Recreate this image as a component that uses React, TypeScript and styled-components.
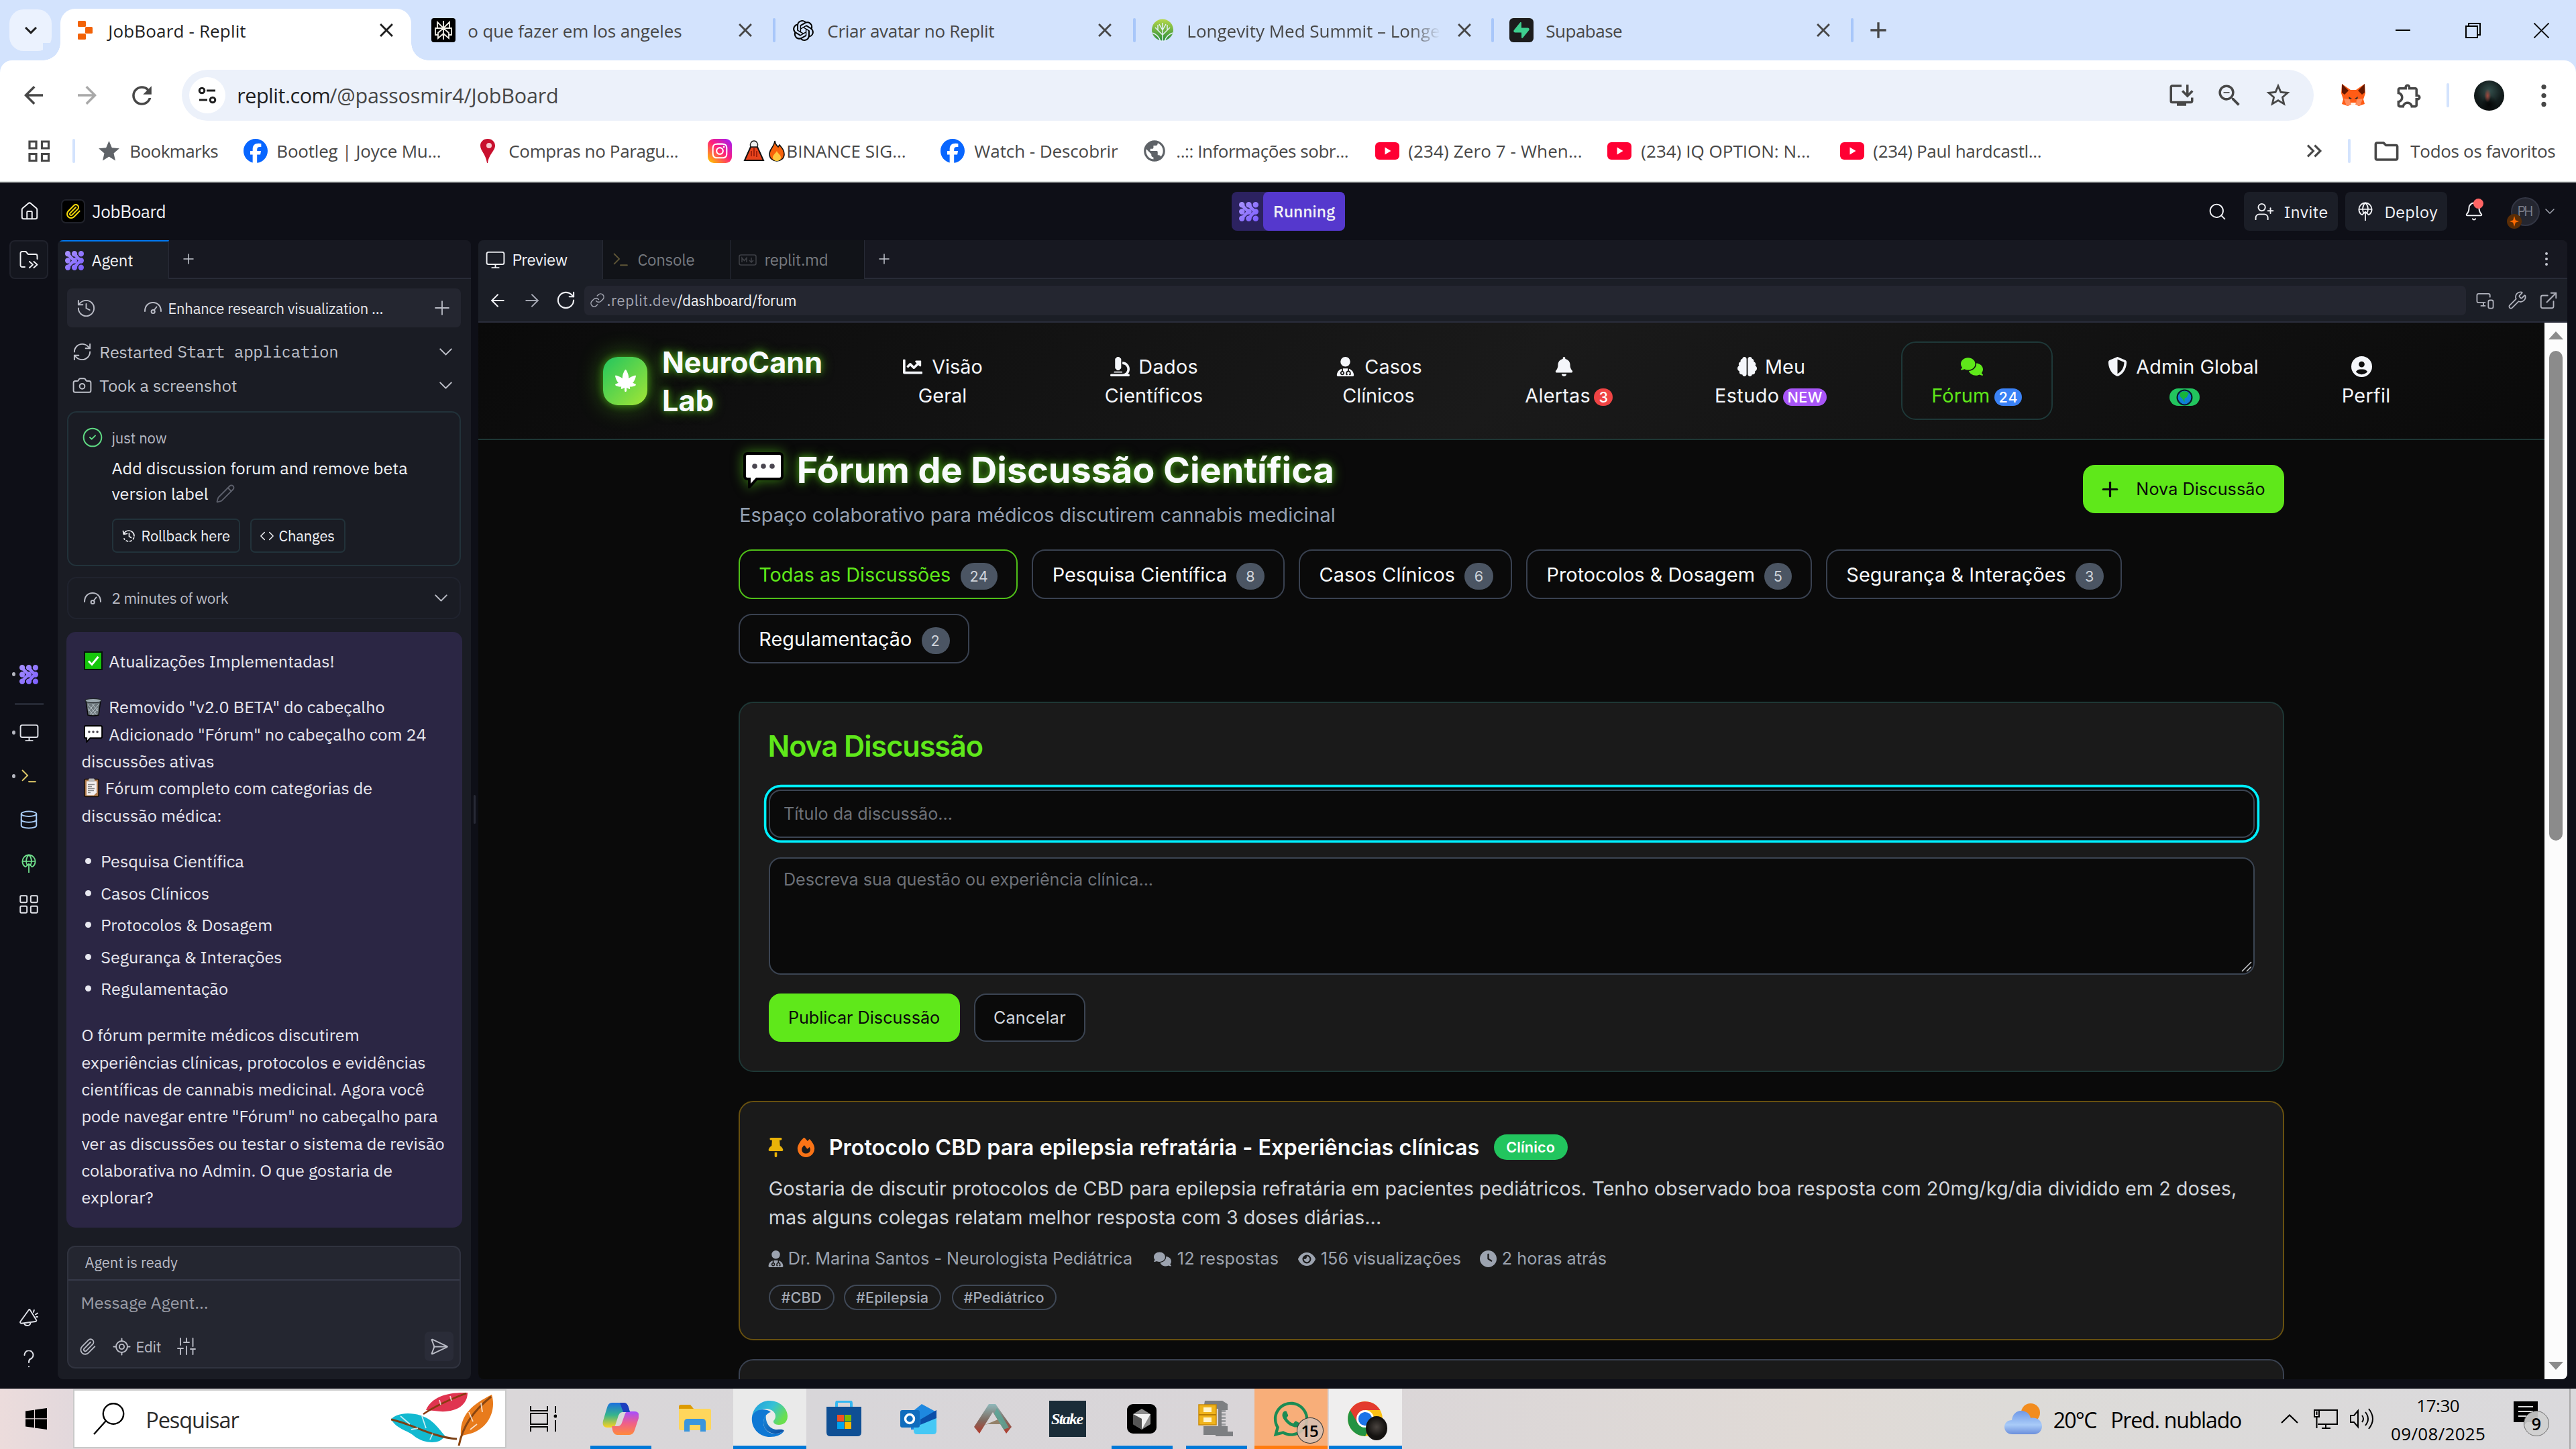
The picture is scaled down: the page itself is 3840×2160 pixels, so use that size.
import React, { useLayoutEffect, useRef, useState } from "react";
import styled, { createGlobalStyle, css } from "styled-components";
import {
  MdAdd, MdArrowBack, MdArrowForward, MdClose, MdKeyboardArrowDown, MdKeyboardDoubleArrowRight,
  MdOutlineExtension, MdOutlineFolder, MdOutlineInstallDesktop, MdRefresh, MdStar, MdStarBorder, MdZoomOut, MdPublic,
} from "react-icons/md";
import { FaChartLine } from "react-icons/fa";
import {
  FaBell, FaBrain, FaCannabis, FaCircleUser, FaClock, FaComments, FaEye, FaFacebook, FaFire, FaInstagram,
  FaMicroscope, FaShieldHalved, FaThumbtack, FaUserDoctor, FaWhatsapp,
} from "react-icons/fa6";
import { SiOpenai, SiSupabase } from "react-icons/si";
import {
  ArrowLeft, ArrowRight, Bell, Camera, ChevronDown, CircleCheck, Code, Database, ExternalLink, History, House,
  LayoutGrid, Link, Monitor, MonitorSmartphone, Paperclip, Pencil, Plus, RefreshCw, RotateCw, Search,
  SendHorizontal, UserPlus, Wrench, LocateFixed,
} from "lucide-react";

const SEGOE = `"Segoe UI", "Open Sans", "Noto Sans", sans-serif`;
const PLEX = `"IBM Plex Sans", Roboto, "Noto Sans", sans-serif`;
const INTER = `Inter, "Noto Sans", sans-serif`;
const MONO = `"IBM Plex Mono", "DejaVu Sans Mono", monospace`;

const GlobalStyle = createGlobalStyle`
  *, *::before, *::after { box-sizing: border-box; }
  html, body { margin: 0; padding: 0; overflow: hidden; background: #0e0f17; }
  svg { display: block; flex: none; }
`;

/* ---------- text ---------- */

type TextProps = {
  w: number; size: number; l?: number; t?: number; weight?: number; color?: string; font?: string; lh?: number;
  glow?: string; fade?: boolean; children: React.ReactNode;
};

/* Side bearing allowance, as a share of the font size. */
const SB = 0.025;

const Label = styled.span<{ $w: number; $s: number; $l: number; $t: number; $wt: number; $c: string; $f: string; $lh: number; $glow?: string; $fade?: boolean }>`
  display: block;
  flex: none;
  width: ${(p) => p.$w + p.$s * SB * 2}px;
  margin-left: ${(p) => p.$l - p.$s * SB}px;
  margin-right: ${(p) => -p.$s * SB}px;
  margin-top: ${(p) => p.$t}px;
  font-family: ${(p) => p.$f};
  font-size: ${(p) => p.$s}px;
  font-weight: ${(p) => p.$wt};
  line-height: ${(p) => p.$lh}px;
  color: ${(p) => p.$c};
  white-space: pre;
  ${(p) => p.$glow && css`text-shadow: ${p.$glow};`}
  ${(p) => p.$fade && css`
    mask-image: linear-gradient(90deg, #000 88%, transparent 100%);
  `}
`;

/* One line of text whose tracking is computed so that it fills its measure. */
function T({ w, size, l = 0, t = 0, weight = 400, color = "inherit", font = "inherit", lh, glow, fade, children }: TextProps) {
  const ref = useRef<HTMLSpanElement>(null);
  const [tracking, setTracking] = useState(0);
  useLayoutEffect(() => {
    const el = ref.current;
    if (!el) return;
    const range = document.createRange();
    range.selectNodeContents(el);
    const n = (el.textContent || "").length;
    if (n > 1) setTracking((w + size * SB * 2 - range.getBoundingClientRect().width) / (n - 1));
  }, [w, size]);
  return (
    <Label ref={ref} $w={w} $s={size} $l={l} $t={t} $wt={weight} $c={color} $f={font} $lh={lh ?? Math.round(size * 1.4)} $glow={glow} $fade={fade}
      style={{ letterSpacing: `${tracking}px` }}>
      {children}
    </Label>
  );
}

const Slot = styled.span<{ $w: number; $l?: number; $c?: string; $t?: number }>`
  display: flex;
  flex: none;
  align-items: center;
  justify-content: center;
  width: ${(p) => p.$w}px;
  margin-left: ${(p) => p.$l ?? 0}px;
  margin-top: ${(p) => p.$t ?? 0}px;
  color: ${(p) => p.$c ?? "inherit"};
`;

/* ---------- drawings ---------- */

const AgentMark = ({ size, h }: { size: number; h?: number }) => (
  <svg width={size} height={h ?? size} viewBox="0 0 24 24" preserveAspectRatio="none">
    <defs>
      <linearGradient id="am" gradientUnits="userSpaceOnUse" x1="0" y1="0" x2="24" y2="24">
        <stop offset="0" stopColor="#a993ff" /><stop offset="1" stopColor="#7a5cff" />
      </linearGradient>
    </defs>
    <g fill="url(#am)">
      {[3.5, 12, 20.5].map((x) => [3.5, 12, 20.5].map((y) => <circle key={`${x}-${y}`} cx={x} cy={y} r="3.5" />))}
    </g>
    <g fill="none" stroke="url(#am)" strokeWidth="4" strokeLinecap="round">
      <path d="M4.500 4.500C6.500 8 9 9.500 12 12 9 14.500 6.500 16 4.500 19.500M13 4.500c2 3.500 4 5 7 7.500-3 2.500-5 4-7 7.500" />
    </g>
  </svg>
);

const DeployMark = ({ size }: { size: number }) => (
  <svg width={size} height={size * 1.2} viewBox="0 0 20 24" fill="none" stroke="currentColor" strokeWidth="1.5" strokeLinecap="round">
    <path d="M5 15.500A8 8 0 1 1 15 15.500M2 9h16M10 1.200c-4 3.500-4 9.500-1.800 13M10 1.200c4 3.500 4 9.500 1.800 13M10 23V12.500M6 16l4-3.800L14 16" />
  </svg>
);

const GaugeMark = ({ size = 28 }: { size?: number }) => (
  <svg width={size} height={size} viewBox="0 0 28 28" fill="none" stroke="currentColor" strokeWidth="2" strokeLinecap="round">
    <path d="M2 19C2 11 7 6 14 6s12 5 12 13M15.500 17.500l4-5" /><circle cx="14.200" cy="19.500" r="2.600" />
  </svg>
);

const PromptMark = ({ w, color }: { w: number; color: string }) => (
  <svg width={w} height={w * 0.9} viewBox="0 0 22 20" fill="none" stroke={color} strokeWidth="1.900" strokeLinecap="round">
    <path d="M1.500 1.500 9 9l-7.500 7.500M11 18.500h10" />
  </svg>
);

const SpeechEmoji = ({ w, h }: { w: number; h: number }) => (
  <svg width={w} height={h} viewBox="0 0 60 54" preserveAspectRatio="none">
    <path d="M6 2h48a4 4 0 0 1 4 4v30a4 4 0 0 1-4 4H20L9 52V40H6a4 4 0 0 1-4-4V6a4 4 0 0 1 4-4z" fill="#fff" stroke="#000" strokeWidth="4" />
    <g fill="#4a4650"><circle cx="17" cy="21" r="3.800" /><circle cx="30" cy="21" r="3.800" /><circle cx="43" cy="21" r="3.800" /></g>
  </svg>
);

const CheckEmoji = () => (
  <svg width="28" height="28" viewBox="0 0 28 28">
    <rect x="1" y="1" width="26" height="26" fill="#16c60c" stroke="#06140a" strokeWidth="2" />
    <path d="M7 14.500l5 5L21.500 8" fill="none" stroke="#fff" strokeWidth="3" />
  </svg>
);

const BinEmoji = () => (
  <svg width="28" height="28" viewBox="0 0 28 28">
    <path d="M3 4h22l-3 22q-8 2-16 0z" fill="#6d777c" stroke="#0a0a0a" strokeWidth="1.500" />
    <ellipse cx="14" cy="4.500" rx="12" ry="3.200" fill="#9aa7ae" stroke="#202428" strokeWidth="1.200" />
    <path d="M6 10l13 15M12 9l9 11M22 10L9 25M16 9L7 20M6 16l8 10M21 16l-8 10" stroke="#c2ccd1" strokeWidth=".9" />
  </svg>
);

const ClipboardEmoji = () => (
  <svg width="23" height="31" viewBox="0 0 23 30">
    <rect x="1" y="2" width="21" height="26" rx="2" fill="#b07a4b" stroke="#140d08" strokeWidth="1.500" />
    <path d="M4 5h15v17l-4 4H4z" fill="#f3efef" />
    <rect x="7" y="1" width="9" height="5" rx="1.500" fill="#b9b9b9" />
    <path d="M6 10h10M6 13h6M6 16h10M6 19h9M6 22h4" stroke="#8a8a8a" strokeWidth="1.400" />
  </svg>
);

const EarthEmoji = () => (
  <svg width="25" height="25" viewBox="0 0 24 24">
    <circle cx="12" cy="12" r="10.500" fill="#0f7fd8" stroke="#0a1a2a" strokeWidth="2" />
    <path d="M6 5c4-3 10-2 12 1l-3 6-3 1v6l-3-5-4-4z" fill="#16b53c" />
  </svg>
);

const ReplitMark = () => (
  <svg width="22" height="28" viewBox="0 0 22 28" fill="#f26207">
    <rect width="12" height="9" rx="1.500" /><rect x="11" y="9" width="11" height="10" rx="1.500" /><rect y="19" width="12" height="9" rx="1.500" />
  </svg>
);

const PerplexityMark = () => (
  <svg width="36" height="36" viewBox="0 0 36 36">
    <rect width="36" height="36" rx="4" fill="#000" />
    <path d="M18 4v28M9 6l9 9 9-9v9H9zM9 15H6v10h4M27 15h3v10h-4M10 30V22l8-7 8 7v8l-8-7z" fill="none" stroke="#f1efe6" strokeWidth="1.800" />
  </svg>
);

const TreeMark = () => (
  <svg width="34" height="34" viewBox="0 0 34 34">
    <defs><linearGradient id="tr" x1="0" y1="0" x2="0" y2="1"><stop offset="0" stopColor="#b6d84a" /><stop offset="1" stopColor="#2b8f3b" /></linearGradient></defs>
    <circle cx="17" cy="16.500" r="16" fill="url(#tr)" />
    <path d="M17 6v28M17 24L6 13M17 24l11-11M17 17l-5-9M17 17l5-9M14 34C12 26 8 23 2 21M20 34c2-8 6-11 12-13M10 17V9M24 17V9" fill="none" stroke="#e4f0f6" strokeWidth="1.500" />
  </svg>
);

const SiteInfoMark = () => (
  <svg width="28" height="26" viewBox="0 0 28 26" fill="none" stroke="#1f1f1f" strokeWidth="3">
    <circle cx="6" cy="6" r="3.800" /><path d="M13 6h13M2 20h12" /><circle cx="22" cy="20" r="3.800" />
  </svg>
);

const AppsGridMark = () => (
  <svg width="33" height="33" viewBox="0 0 33 33" fill="none" stroke="#474747" strokeWidth="3.200">
    <path d="M2 2h10v10H2zM20.500 2h10v10h-10zM2 20.500h10v10H2zM20.500 20.500h10v10h-10z" />
  </svg>
);

const PinMark = () => (
  <svg width="22" height="36" viewBox="0 0 22 36">
    <path d="M11 0C4 0 0 5 0 10c0 8 8 12 10 26h1c2-14 11-18 11-26C22 5 18 0 11 0z" fill="#c8102e" /><circle cx="13" cy="10" r="4" fill="#f6c9cf" />
  </svg>
);

const InstaMark = () => (
  <svg width="36" height="36" viewBox="0 0 36 36">
    <defs><linearGradient id="ig" x1="1" y1="0" x2=".1" y2="1"><stop offset="0" stopColor="#9a1bff" /><stop offset=".5" stopColor="#ff1f7a" /><stop offset="1" stopColor="#ffc400" /></linearGradient></defs>
    <rect width="36" height="36" rx="9" fill="url(#ig)" />
    <g transform="translate(5 5)" color="#fff"><FaInstagram size={26} /></g>
  </svg>
);

const VolcanoMark = () => (
  <svg width="32" height="32" viewBox="0 0 32 32">
    <path d="M11 10L2 30h28L21 10z" fill="#e8441c" stroke="#111" strokeWidth="2" /><path d="M16 12v12M12 16v8M20 16v9" stroke="#a3200c" strokeWidth="2" />
    <path d="M11 10c-2-4 1-9 5-9s7 5 5 9z" fill="#f0f0f0" stroke="#222" strokeWidth="1.500" />
  </svg>
);

const FlameMark = () => (
  <svg width="24" height="32" viewBox="0 0 24 32">
    <path d="M9 1c1 5 2 6 5 9l2-3c5 6 7 9 7 14 0 6-5 10-11 10S1 27 1 21C1 13 8 10 9 1z" fill="#f7630c" stroke="#111" strokeWidth="1.600" />
    <path d="M12 16c1 4 6 5 6 10 0 3-3 5-6 5s-6-2-6-5c0-4 4-6 6-10z" fill="#ffc83d" />
  </svg>
);

const YoutubeMark = () => (
  <svg width="36" height="26" viewBox="0 0 36 26"><rect width="36" height="26" rx="6" fill="#ff0033" /><path d="M14.500 7.500v11l9-5.500z" fill="#fff" /></svg>
);

const FoxMark = () => (
  <svg width="36" height="34" viewBox="0 0 36 34">
    <path d="M1 0l13 9h8L35 0l1 14-3 9 2 7-9 3-4-2h-8l-4 2-9-3 2-7-3-9z" fill="#ff5c16" />
    <path d="M1 0l10 10-6 6-4-3zM35 0L25 10l6 6 4-3z" fill="#661800" />
    <path d="M14 28h8l-1 4h-6z" fill="#fff3ea" /><path d="M11 19l5 3-4 1zM25 19l-5 3 4 1z" fill="#2b2b2b" /><path d="M4 22l9 1 1 8-6 2z" fill="#ff8d5d" /><path d="M32 22l-9 1-1 8 6 2z" fill="#ff8d5d" />
  </svg>
);

const FolderMoreMark = () => (
  <svg width="28" height="26" viewBox="0 0 28 26" fill="none" stroke="currentColor" strokeWidth="1.900" strokeLinecap="round" strokeLinejoin="round">
    <path d="M8 24H4a2.500 2.500 0 0 1-2.500-2.500V3.500A2.500 2.500 0 0 1 4 1h5.500l3.500 4h11a2.500 2.500 0 0 1 2.500 2.500V12M15 16l5 4.500-5 4.500M21.500 16l5 4.500-5 4.500" />
  </svg>
);

const SlidersMark = () => (
  <svg width="28" height="26" viewBox="0 0 28 26" fill="none" stroke="currentColor" strokeWidth="1.900" strokeLinecap="round">
    <path d="M5 1v10M1 16h8M5 16v9M14 1v6M10 7h8M14 13v12M23.500 1v12M20 17h7M23.500 17v8" />
  </svg>
);

const MarkdownMark = () => (
  <svg width="27" height="17" viewBox="0 0 27 17" fill="none" stroke="#3d3f45" strokeWidth="1.600">
    <rect x="1" y="1" width="25" height="15" rx="2.500" /><path d="M5 12V5.500l3.500 4 3.500-4V12M19 5v6.500M16 9l3 3 3-3" />
  </svg>
);

const AnnounceMark = () => (
  <svg width="28" height="26" viewBox="0 0 28 26" fill="none" stroke="currentColor" strokeWidth="1.900" strokeLinecap="round" strokeLinejoin="round">
    <path d="M15.500 1.200L25 16.500a1.600 1.600 0 0 1-1.200 2.500L3 21.800a1.800 1.800 0 0 1-1.600-2.800L14 1.500a1 1 0 0 1 1.500-.3zM7 21.500c.5 2.400 2.500 3.500 4.800 3.500s4.500-1.600 4.800-4.500M21 5l.8-3M24 8.500l3-2M25 12h2" />
  </svg>
);

const HelpMark = () => (
  <svg width="16" height="26" viewBox="0 0 16 26" fill="none" stroke="currentColor" strokeWidth="2" strokeLinecap="round">
    <path d="M1.500 7A6.500 6.500 0 1 1 10 13c-1.800.9-2 2-2 5M8 24v.2" />
  </svg>
);

const RollbackMark = () => (
  <svg width="20" height="20" viewBox="0 0 20 20" fill="none" stroke="currentColor" strokeWidth="1.700" strokeLinecap="round" strokeLinejoin="round">
    <path d="M2.500 7.500A8 8 0 0 1 10 2a8 8 0 0 1 8 8M1.500 2.500l1 5 5-1M10.500 6v4.500l3 2" /><path d="M17.600 12.500A8 8 0 0 1 3 14" strokeDasharray="2.500 3.200" />
  </svg>
);

const Kebab = ({ h, r, color }: { h: number; r: number; color: string }) => (
  <svg width="8" height={h} viewBox={`0 0 8 ${h}`} fill={color}><circle cx="4" cy={r} r={r} /><circle cx="4" cy={h / 2} r={r} /><circle cx="4" cy={h - r} r={r} /></svg>
);

/* ---------- browser chrome ---------- */

const Screen = styled.div`
  width: 3840px; height: 2160px; overflow: hidden; display: flex; flex-direction: column; background: #0e0f17;
`;
const TabStrip = styled.div`
  flex: none; height: 90px; display: flex; align-items: center; background: #d3e3fd; color: #474747; font-family: ${SEGOE};
`;
const TabSearch = styled.div`
  flex: none; width: 63px; height: 62px; margin-left: 14px; border-radius: 21px; background: #ebf2fe; display: flex; align-items: center; justify-content: center; color: #1f1f1f;
`;
const ActiveTab = styled.div`
  position: relative; flex: none; width: 523px; height: 77px; margin-left: 13px; padding: 0 0 13px 26px; align-self: flex-end;
  display: flex; align-items: center; background: #fff; border-radius: 22px 22px 0 0; color: #1f1f1f;
  &::before, &::after { content: ""; position: absolute; bottom: 0; width: 26px; height: 26px; }
  &::before { left: -26px; background: radial-gradient(circle at 0 0, #d3e3fd 25.500px, #fff 26px); }
  &::after { right: -26px; background: radial-gradient(circle at 100% 0, #d3e3fd 25.500px, #fff 26px); }
`;
const Divider = styled.span<{ $l: number; $c?: string }>`
  flex: none; width: 4px; height: 36px; border-radius: 2px; margin-left: ${(p) => p.$l}px; background: ${(p) => p.$c ?? "#a8c7fa"};
`;
const ChromeBody = styled.div`flex: none; height: 182px; background: #d3e3fd;`;
const ChromePanel = styled.div`
  height: 182px; background: #fff; border-radius: 18px 18px 0 0; border-bottom: 2px solid #dfe4e2; color: #474747; font-family: ${SEGOE};
`;
const Toolbar = styled.div`height: 104px; display: flex; align-items: center;`;
const Omnibox = styled.div`
  flex: none; width: 3178px; height: 76px; margin-left: 45px; border-radius: 38px; background: #ecf1fa; display: flex; align-items: center;
`;
const SiteInfo = styled.div`
  flex: none; width: 54px; height: 54px; margin-left: 11px; border-radius: 50%; background: #fff; display: flex; align-items: center; justify-content: center;
`;
const ProfilePic = styled.div`
  flex: none; width: 45px; height: 45px; margin-left: 37px; border-radius: 50%;
  background: radial-gradient(ellipse 5px 10px at 45% 50%, #a2483d, transparent), radial-gradient(ellipse 12px 14px at 50% 80%, #050606, transparent), radial-gradient(circle at 50% 35%, #35504d, #131d1d 50%, #070909);
`;
const Bookmarks = styled.div`height: 62px; display: flex; align-items: center;`;

type TabInfo = { icon: React.ReactNode; il: number; iw: number; text: string; tl: number; tw: number; cl: number; sl: number; fade?: boolean };
const tabs: TabInfo[] = [
  { icon: <PerplexityMark />, il: 30, iw: 36, text: "o que fazer em los angeles", tl: 19, tw: 318, cl: 85, sl: 31 },
  { icon: <SiOpenai size={31} color="#000" />, il: 26, iw: 30, text: "Criar avatar no Replit", tl: 22, tw: 248, cl: 155, sl: 32 },
  { icon: <TreeMark />, il: 23, iw: 34, text: "Longevity Med Summit – Longe", tl: 20, tw: 376, cl: 27, sl: 30, fade: true },
];

const SupabaseTile = styled.span`
  width: 36px; height: 36px; border-radius: 6px; background: #1c1c1c; display: flex; align-items: center; justify-content: center; color: #3ecf8e;
`;

function Chrome() {
  const f = 26;
  return (
    <>
      <TabStrip>
        <TabSearch><MdKeyboardArrowDown size={36} /></TabSearch>
        <ActiveTab>
          <Slot $w={22}><ReplitMark /></Slot>
          <T l={24} w={204} t={2} size={f}>JobBoard - Replit</T>
          <Slot $l={200} $w={20}><MdClose size={34} /></Slot>
        </ActiveTab>
        {tabs.map((t) => (
          <React.Fragment key={t.text}>
            <Slot $l={t.il} $w={t.iw}>{t.icon}</Slot>
            <T l={t.tl} w={t.tw} t={2} size={f} fade={t.fade}>{t.text}</T>
            <Slot $l={t.cl} $w={20}><MdClose size={34} /></Slot>
            <Divider $l={t.sl} />
          </React.Fragment>
        ))}
        <Slot $l={23} $w={36}><SupabaseTile><SiSupabase size={24} /></SupabaseTile></Slot>
        <T l={19} w={113} t={2} size={f}>Supabase</T>
        <Slot $l={290} $w={20}><MdClose size={34} /></Slot>
        <Divider $l={31} />
        <Slot $l={25} $w={24}><MdAdd size={40} /></Slot>
        <Slot $l={759} $w={22}><svg width="22" height="2"><rect width="22" height="2" fill="#000" /></svg></Slot>
        <Slot $l={82} $w={23}>
          <svg width="23" height="23" viewBox="0 0 23 23" fill="none" stroke="#000" strokeWidth="2"><path d="M1 5h17v17H1zM5 5V1h17v17h-4" /></svg>
        </Slot>
        <Slot $l={79} $w={23}><svg width="23" height="23" viewBox="0 0 23 23" stroke="#000" strokeWidth="1.800"><path d="M.5.500l22 22M22.500.500l-22 22" /></svg></Slot>
      </TabStrip>
      <ChromeBody>
        <ChromePanel>
          <Toolbar>
            <Slot $l={36} $w={28}><MdArrowBack size={42} /></Slot>
            <Slot $l={52} $w={28} $c="#a8a8a8"><MdArrowForward size={42} /></Slot>
            <Slot $l={53} $w={29}><MdRefresh size={43} /></Slot>
            <Omnibox>
              <SiteInfo><SiteInfoMark /></SiteInfo>
              <T l={18} w={138} size={30.5} color="#1f1f1f">replit.com</T>
              <T w={340} size={30.5}>/@passosmir4/JobBoard</T>
              <Slot $l={2401} $w={37}><MdOutlineInstallDesktop size={42} /></Slot>
              <Slot $l={38} $w={31}><MdZoomOut size={43} /></Slot>
              <Slot $l={39} $w={35}><MdStarBorder size={42} /></Slot>
            </Omnibox>
            <Slot $l={41} $w={36}><FoxMark /></Slot>
            <Slot $l={47} $w={37}><MdOutlineExtension size={43} /></Slot>
            <Divider $l={37} $c="#d3e3fd" />
            <ProfilePic />
            <Slot $l={55} $w={8}><Kebab h={33} r={3.600} color="#474747" /></Slot>
          </Toolbar>
          <Bookmarks>
            <Slot $l={42} $w={33}><AppsGridMark /></Slot>
            <Divider $l={33} $c="#d3e3fd" />
            <Slot $l={36} $w={29} $c="#5f6368"><MdStar size={37} /></Slot>
            <T l={17} w={131} size={f}>Bookmarks</T>
            <Slot $l={37} $w={37} $c="#0866ff"><FaFacebook size={36} /></Slot>
            <T l={14} w={244} size={f}>Bootleg | Joyce Mu...</T>
            <Slot $l={59} $w={22}><PinMark /></Slot>
            <T l={21} w={252} size={f}>Compras no Paragu...</T>
            <Slot $l={44} $w={36}><InstaMark /></Slot>
            <Slot $l={17} $w={32}><VolcanoMark /></Slot>
            <Slot $l={6} $w={23}><FlameMark /></Slot>
            <T l={4} w={177} size={f}>BINANCE SIG...</T>
            <Slot $l={52} $w={36} $c="#0866ff"><FaFacebook size={36} /></Slot>
            <T l={15} w={213} size={f}>Watch - Descobrir</T>
            <Slot $l={39} $w={32} $c="#5f6368"><MdPublic size={38} /></Slot>
            <T l={17} w={256} size={f}>..:: Informações sobr...</T>
            <Slot $l={40} $w={36}><YoutubeMark /></Slot>
            <T l={14} w={258} size={f}>(234) Zero 7 - When...</T>
            <Slot $l={38} $w={36}><YoutubeMark /></Slot>
            <T l={15} w={251} size={f}>(234) IQ OPTION: N...</T>
            <Slot $l={45} $w={36}><YoutubeMark /></Slot>
            <T l={14} w={250} size={f}>(234) Paul hardcastl...</T>
            <Slot $l={396} $w={21}><MdKeyboardDoubleArrowRight size={38} /></Slot>
            <Divider $l={40} $c="#d3e3fd" />
            <Slot $l={35} $w={37}><MdOutlineFolder size={43} /></Slot>
            <T l={18} w={215} size={f}>Todos os favoritos</T>
          </Bookmarks>
        </ChromePanel>
      </ChromeBody>
    </>
  );
}

/* ---------- workspace header and rail ---------- */

const Workspace = styled.div`
  flex: none; height: 1798px; display: flex; flex-direction: column; background: #0e0f17; color: #f0f1f5; font-family: ${PLEX};
`;
const TopBar = styled.div`flex: none; height: 86px; display: flex; align-items: center;`;
const AppTile = styled.div`
  flex: none; width: 36px; height: 36px; margin-left: 34px; border-radius: 7px; border: 2px solid #20222b; background: #000; color: #f5d90a;
  display: flex; align-items: center; justify-content: center;
`;
const RunPill = styled.div`flex: none; display: flex; width: 169px; height: 58px; margin-left: 1589px; border-radius: 8px; background: #2c2260;`;
const RunIcon = styled.div`width: 47px; padding-left: 4px; display: flex; align-items: center; justify-content: center;`;
const RunLabel = styled.div`width: 122px; display: flex; align-items: center; justify-content: center; border-radius: 8px; background: #5538cd;`;
const TopButton = styled.div<{ $w: number; $l: number; $p: number }>`
  flex: none; display: flex; align-items: center; width: ${(p) => p.$w}px; height: 58px; margin-left: ${(p) => p.$l}px; padding-left: ${(p) => p.$p}px;
  border-radius: 8px; background: #1b1e27;
`;
const BellBox = styled.div`position: relative; flex: none; width: 26px; height: 28px; margin-left: 27px; display: flex; align-items: center; justify-content: center;`;
const RedDot = styled.span`position: absolute; left: 12px; top: -5px; width: 15px; height: 15px; border-radius: 50%; background: #ff6464;`;
const Avatar = styled.div`
  position: relative; flex: none; width: 43px; height: 43px; margin-left: 42px; border-radius: 50%; border: 2px solid #323543; background: #242630;
  display: flex; align-items: center; justify-content: center; color: #7d7f8a;
`;
const CoreBadge = styled.span`
  position: absolute; left: -8px; top: 23px; width: 22px; height: 22px; border-radius: 50%; background: #5a2d06; display: flex; align-items: center; justify-content: center;
`;
const Body = styled.div`flex: none; height: 1698px; display: flex;`;
const Rail = styled.div`flex: none; width: 86px; display: flex; flex-direction: column;`;
const RailButton = styled.div`
  width: 58px; height: 58px; margin-left: 14px; border: 2px solid #20222c; border-radius: 8px; background: #14161e; display: flex; align-items: center; justify-content: center;
`;
const RailRow = styled.div<{ $t: number; $c?: string }>`
  flex: none; height: 40px; margin-top: ${(p) => p.$t}px; padding-left: 18px; display: flex; align-items: center; color: ${(p) => p.$c ?? "#dfe1e8"};
`;
const RailDot = styled.span<{ $on?: boolean }>`width: 5px; height: 6px; border-radius: 50%; background: ${(p) => (p.$on ? "#b5b7c0" : "transparent")};`;
const RailRule = styled.div`flex: none; width: 43px; height: 3px; margin: 23px 0 0 22px; background: #252834;`;

function RailItem({ t, c, on, children }: { t: number; c?: string; on?: boolean; children: React.ReactNode }) {
  return <RailRow $t={t} $c={c}><RailDot $on={on} /><Slot $l={6} $w={28}>{children}</Slot></RailRow>;
}

/* ---------- agent panel ---------- */

const Panel = styled.div`flex: none; width: 616px; height: 1698px; display: flex; flex-direction: column; border-radius: 8px; background: #1a1c24; overflow: hidden;`;
const PanelTabs = styled.div`flex: none; height: 58px; display: flex; background: #171821;`;
const PanelTab = styled.div`
  flex: none; width: 166px; height: 58px; display: flex; align-items: center; padding-left: 11px; background: #1b1e26; border-top: 2px solid #0079f2; border-right: 1px solid #282b37;
`;
const TabsRest = styled.div`flex: 1; height: 58px; border-bottom: 2px solid #282b37; display: flex; align-items: center; color: #c5c7d0;`;
const ThreadBar = styled.div`
  flex: none; width: 587px; height: 58px; margin: 14px 0 0 14px; padding-left: 14px; border-radius: 7px; background: #242630; display: flex; align-items: center; color: #b9bbc5;
`;
const StepRow = styled.div<{ $t: number }>`flex: none; height: 50px; margin-top: ${(p) => p.$t}px; padding-left: 22px; display: flex; align-items: center; color: #bfc1ca;`;
const Checkpoint = styled.div`
  flex: none; width: 587px; height: 231px; margin: 14px 0 0 14px; padding: 18px 0 0 22px; border: 2px solid #22323a; border-radius: 14px; display: flex; flex-direction: column;
`;
const Line = styled.div<{ $h: number; $t?: number; $l?: number }>`
  flex: none; height: ${(p) => p.$h}px; margin-top: ${(p) => p.$t ?? 0}px; padding-left: ${(p) => p.$l ?? 0}px; display: flex; align-items: center;
`;
const SmallButton = styled.div<{ $w: number; $l: number }>`
  flex: none; width: ${(p) => p.$w}px; height: 51px; margin-left: ${(p) => p.$l}px; padding-left: 13px; border: 2px solid #22323a; border-radius: 7px; display: flex; align-items: center;
`;
const WorkCard = styled.div`
  flex: none; width: 587px; height: 63px; margin: 16px 0 0 14px; padding-left: 22px; border: 2px solid #20232e; border-radius: 14px; display: flex; align-items: center; color: #b9bbc5;
`;
const Reply = styled.div`
  flex: none; width: 590px; height: 888px; margin: 19px 0 0 13px; padding: 23px 0 0 23px; border-radius: 14px; background: #2b2644; color: #e8e8f0;
`;
const Bullet = styled.span`flex: none; width: 9px; height: 9px; margin-left: 5px; border-radius: 50%; background: #e8e8f0;`;
const Composer = styled.div`
  flex: none; width: 587px; height: 183px; margin: 27px 0 0 14px; border: 2px solid #30333f; border-radius: 12px; background: #242630; display: flex; flex-direction: column; color: #b9bbc5;
`;
const ComposerStatus = styled.div`flex: none; height: 50px; padding: 0 0 3px 25px; border-bottom: 2px solid #363949; display: flex; align-items: center;`;
const ComposerInput = styled.div`flex: none; height: 74px; padding: 0 0 9px 19px; display: flex; align-items: center; color: #9a9ca6;`;
const ComposerTools = styled.div`flex: none; height: 48px; padding-left: 18px; display: flex; align-items: center;`;
const SendButton = styled.div`flex: none; width: 43px; height: 44px; margin-left: 341px; border-radius: 7px; background: #2a2c38; display: flex; align-items: center; justify-content: center;`;

const LH = 40.3;
const FS = 25.2;
const intro: { icon?: React.ReactNode; iw?: number; l: number; w: number; t: string; top?: number }[] = [
  { icon: <CheckEmoji />, iw: 28, l: 10, w: 335, t: "Atualizações Implementadas!" },
  { icon: <BinEmoji />, iw: 28, l: 10, w: 410, t: 'Removido "v2.0 BETA" do cabeçalho', top: 28.4 },
  { icon: <SpeechEmoji w={28} h={26} />, iw: 28, l: 10, w: 472, t: 'Adicionado "Fórum" no cabeçalho com 24' },
  { l: 0, w: 197, t: "discussões ativas" },
  { icon: <ClipboardEmoji />, iw: 23, l: 9.5, w: 397, t: "Fórum completo com categorias de" },
  { l: 0, w: 208, t: "discussão médica:" },
];
const bullets: [string, number][] = [
  ["Pesquisa Científica", 212], ["Casos Clínicos", 160.5], ["Protocolos & Dosagem", 254.5], ["Segurança & Interações", 269], ["Regulamentação", 188.5],
];
const outro: [string, number][] = [
  ["O fórum permite médicos discutirem", 413], ["experiências clínicas, protocolos e evidências", 512], ["científicas de cannabis medicinal. Agora você", 510],
  ['pode navegar entre "Fórum" no cabeçalho para', 530], ["ver as discussões ou testar o sistema de revisão", 540], ["colaborativa no Admin. O que gostaria de", 462.5], ["explorar?", 106],
];

function AgentPanel() {
  return (
    <Panel>
      <PanelTabs>
        <PanelTab><AgentMark size={28} h={29} /><T l={12} w={61} size={24}>Agent</T></PanelTab>
        <TabsRest><Slot $l={18} $w={22}><Plus size={24} strokeWidth={1.5} /></Slot></TabsRest>
      </PanelTabs>
      <ThreadBar>
        <Slot $w={28}><History size={31} strokeWidth={1.5} /></Slot>
        <Slot $l={72} $w={27}><GaugeMark /></Slot>
        <T l={10} w={320} size={22} color="#e6e7ec">Enhance research visualization ...</T>
        <Slot $l={77} $w={22}><Plus size={34} strokeWidth={1.3} /></Slot>
      </ThreadBar>
      <StepRow $t={11}>
        <Slot $w={28}><RefreshCw size={31} strokeWidth={1.5} /></Slot>
        <T l={13} w={108} size={FS}>Restarted</T>
        <T l={8} w={239} size={24} font={MONO}>Start application</T>
        <Slot $l={152} $w={17}><ChevronDown size={33} strokeWidth={1.5} /></Slot>
      </StepRow>
      <StepRow $t={0}>
        <Slot $w={28}><Camera size={31} strokeWidth={1.5} /></Slot>
        <T l={13} w={204} size={FS}>Took a screenshot</T>
        <Slot $l={303} $w={17}><ChevronDown size={33} strokeWidth={1.5} /></Slot>
      </StepRow>
      <Checkpoint as="section">
        <Line $h={36} $t={1}>
          <Slot $w={27} $c="#5fd983"><CircleCheck size={32} strokeWidth={1.5} /></Slot>
          <T l={16} w={81} size={22} color="#b9bbc5">just now</T>
        </Line>
        <Line $h={38.5} $t={8} $l={43}><T w={440} size={FS}>Add discussion forum and remove beta</T></Line>
        <Line $h={38.5} $l={43}>
          <T w={143} size={FS}>version label</T>
          <Slot $l={13} $w={26} $c="#5c5f6b"><Pencil size={30} strokeWidth={1.5} /></Slot>
        </Line>
        <Line $h={51} $t={18} $l={43}>
          <SmallButton $w={191} $l={0}><Slot $w={20}><RollbackMark /></Slot><T l={9} w={131.5} size={22}>Rollback here</T></SmallButton>
          <SmallButton $w={142} $l={15}><Slot $w={20}><Code size={22} strokeWidth={1.6} /></Slot><T l={8} w={82.5} size={22}>Changes</T></SmallButton>
        </Line>
      </Checkpoint>
      <WorkCard>
        <Slot $w={27}><GaugeMark /></Slot>
        <T l={16} w={173} size={22.5}>2 minutes of work</T>
        <Slot $l={309} $w={17}><ChevronDown size={33} strokeWidth={1.5} /></Slot>
      </WorkCard>
      <Reply>
        {intro.map((r) => (
          <Line key={r.t} $h={LH} $t={r.top}>
            {r.icon && <Slot $l={3} $w={r.iw!}>{r.icon}</Slot>}
            <T l={r.l} w={r.w} size={FS}>{r.t}</T>
          </Line>
        ))}
        {bullets.map(([t, w], i) => (
          <Line key={t} $h={47.6} $t={i ? 0 : 24.6}><Bullet /><T l={15} w={w} size={FS}>{t}</T></Line>
        ))}
        {outro.map(([t, w], i) => (
          <Line key={t} $h={LH} $t={i ? 0 : 25}><T w={w} size={FS}>{t}</T></Line>
        ))}
      </Reply>
      <Composer>
        <ComposerStatus><T w={137.5} size={22}>Agent is ready</T></ComposerStatus>
        <ComposerInput><T w={189} size={FS}>Message Agent...</T></ComposerInput>
        <ComposerTools>
          <Slot $w={20}><Paperclip size={27} strokeWidth={1.6} /></Slot>
          <Slot $l={28} $w={26}><LocateFixed size={29} strokeWidth={1.6} /></Slot>
          <T l={9} w={37} size={22}>Edit</T>
          <Slot $l={24} $w={28}><SlidersMark /></Slot>
          <SendButton><SendHorizontal size={29} strokeWidth={1.6} /></SendButton>
        </ComposerTools>
      </Composer>
    </Panel>
  );
}

/* ---------- preview pane ---------- */

const Splitter = styled.div`flex: none; width: 11px; padding: 827px 0 0 4px;`;
const SplitGrip = styled.div`width: 3px; height: 43px; border-radius: 2px; background: #272935;`;
const Pane = styled.div`flex: none; width: 3114px; height: 1698px; display: flex; flex-direction: column; border-radius: 8px; background: #1b1e26; overflow: hidden;`;
const PaneTabs = styled.div`flex: none; height: 58px; display: flex; background: #171821;`;
const PaneTab = styled.div<{ $w: number; $p: number; $on?: boolean }>`
  flex: none; width: ${(p) => p.$w}px; height: 58px; padding-left: ${(p) => p.$p}px; display: flex; align-items: center;
  background: ${(p) => (p.$on ? "#1b1e27" : "#111318")}; color: ${(p) => (p.$on ? "#f0f1f5" : "#76797f")}; border-right: 1px solid #272a35;
`;
const UrlRow = styled.div`flex: none; height: 65px; display: flex; align-items: center; border-bottom: 2px solid #2a2d3b;`;
const UrlBar = styled.div`flex: none; width: 2805px; height: 44px; margin-left: 14px; padding-left: 9px; border-radius: 7px; background: #242630; display: flex; align-items: center;`;
const Frame = styled.div`flex: none; height: 1575px; display: flex;`;
const Page = styled.div`flex: none; width: 3080px; height: 1575px; overflow: hidden; background: #0a0a0a; color: #f8fafc; font-family: ${INTER};`;
const ScrollTrack = styled.div`flex: none; width: 34px; height: 1575px; background: #fcfcfc; display: flex; flex-direction: column; align-items: center; padding: 13px 0 14px;`;
const ScrollThumb = styled.div`width: 20px; height: 730px; margin: 17px 0 auto; border-radius: 10px; background: #8b8b8b;`;

const AppHeader = styled.div`
  height: 175px; display: flex; align-items: center; border-bottom: 2px solid #1e3735;
  background: linear-gradient(135deg, #0a0a0a 0%, #1a1a1a 50%, #0a0a0a 100%);
`;
const Logo = styled.div`
  flex: none; width: 66px; height: 72px; margin-left: 186px; border-radius: 22px; display: flex; align-items: center; justify-content: center; color: #fff;
  background: linear-gradient(135deg, #22c55e, #a3e635); box-shadow: 0 0 36px rgba(97, 232, 26, 0.45), 0 0 12px rgba(97, 232, 26, 0.5);
`;
const Brand = styled.div`flex: none; width: 237px; margin-left: 23px; padding-top: 2px;`;
const NavItem = styled.div<{ $w: number; $l: number; $on?: boolean }>`
  flex: none; width: ${(p) => p.$w}px; height: 117px; margin-left: ${(p) => p.$l}px; display: flex; flex-direction: column; justify-content: center; padding-top: 2px;
  border-radius: 22px; border: 2px solid ${(p) => (p.$on ? "#1e3838" : "transparent")}; color: ${(p) => (p.$on ? "#5fe81a" : "#f4f6fa")};
`;
const NavLine = styled.div<{ $r?: number }>`height: 43.2px; display: flex; align-items: center; justify-content: center; padding-right: ${(p) => p.$r ?? 0}px;`;
const NavBadge = styled.span<{ $w: number; $l: number; $c: string }>`
  flex: none; display: flex; align-items: center; justify-content: center; width: ${(p) => p.$w}px; height: 26px; margin: 4px 0 0 ${(p) => p.$l}px;
  border-radius: 13px; background: ${(p) => p.$c}; color: #fff;
`;

const Main = styled.div`width: 2304px; margin-left: 388px; padding-top: 15px;`;
const Heading = styled.div`height: 117px; display: flex; justify-content: space-between;`;
const GreenButton = styled.div<{ $w: number; $t?: number; $p: number }>`
  flex: none; width: ${(p) => p.$w}px; height: 72px; margin-top: ${(p) => p.$t ?? 0}px; padding-left: ${(p) => p.$p}px; display: flex; align-items: center;
  border-radius: 18px; background: #5fe81a; color: #0a0a0a;
`;
const GhostButton = styled.div`
  width: 166px; height: 72px; margin-left: 21px; padding-left: 28px; display: flex; align-items: center; border-radius: 18px; border: 2px solid #3b4452; background: #0a0a0a;
`;
const Chips = styled.div`display: flex; flex-wrap: wrap; gap: 22px 21.400px; margin-top: 31px;`;
const Chip = styled.div<{ $w: number; $on?: boolean }>`
  flex: none; width: ${(p) => p.$w}px; height: 74px; padding-left: 29px; display: flex; align-items: center; border-radius: 20px;
  border: 2px solid ${(p) => (p.$on ? "#4fbf18" : "#394150")}; color: ${(p) => (p.$on ? "#5fe81a" : "#f8fafc")};
`;
const Count = styled.span<{ $w: number }>`
  flex: none; width: ${(p) => p.$w}px; height: 40px; margin: 6px 0 0 15px; border-radius: 20px; background: #4b5563; color: #d1d5db; display: flex; align-items: center; justify-content: center;
`;
const Card = styled.div<{ $h: number; $t: number; $pt: number; $c: string }>`
  height: ${(p) => p.$h}px; margin-top: ${(p) => p.$t}px; padding: ${(p) => p.$pt}px 42.500px 0; border: 2px solid ${(p) => p.$c}; border-radius: 22px; background: #1a1a1a;
`;
const Field = styled.div`
  height: 72px; margin-top: 39px; padding-left: 21px; display: flex; align-items: center; border: 2px solid #3b4452; border-radius: 18px; background: #0a0a0a;
  box-shadow: 0 0 0 3.600px #0a0a0a, 0 0 0 7.200px #00f0ff; color: #6d7178;
`;
const Area = styled.div`
  position: relative; height: 175px; margin-top: 29px; padding: 13px 0 0 21px; border: 2px solid #3b4452; border-radius: 18px; background: #0a0a0a; color: #6d7178;
`;
const Grip = styled.svg`position: absolute; right: 2px; bottom: 2px;`;
const Status = styled.span`
  flex: none; width: 110px; height: 38px; margin-left: 22px; border-radius: 19px; background: #22c55e; color: #fff; display: flex; align-items: center; justify-content: center;
`;
const Tag = styled.span<{ $w: number; $l: number }>`
  flex: none; width: ${(p) => p.$w}px; height: 38px; margin-left: ${(p) => p.$l}px; border: 2px solid #3f4856; border-radius: 19px; display: flex; align-items: center; justify-content: center; color: #a3aab6;
`;
const SpeechGlow = styled.div`filter: drop-shadow(0 0 9px rgba(97, 232, 26, 0.55));`;
const MetaLine = styled.div`height: 36px; margin-top: 22.500px; display: flex; align-items: center; color: #9ca3af;`;

const chips: [string, number, string, number, number][] = [
  ["Todas as Discussões", 284.6, "24", 55, 416], ["Pesquisa Científica", 259, "8", 42, 376.5], ["Casos Clínicos", 201, "6", 43, 317.5],
  ["Protocolos & Dosagem", 309, "5", 41, 425.5], ["Segurança & Interações", 326, "3", 42, 441], ["Regulamentação", 226.6, "2", 42, 344],
];

function ForumPage() {
  const n = 28.8;
  const glow = "0 0 18px rgba(97,232,26,.55), 0 0 10px rgba(97,232,26,.5)";
  return (
    <Page>
      <AppHeader>
        <Logo><FaCannabis size={33} /></Logo>
        <Brand>
          <T w={237} size={43.2} lh={57} weight={700} glow={glow}>NeuroCann</T>
          <T w={75} size={43.2} lh={57} weight={700} glow={glow}>Lab</T>
        </Brand>
        <NavItem $w={150} $l={105}>
          <NavLine><FaChartLine size={29} /><T l={15} w={74} size={n}>Visão</T></NavLine>
          <NavLine><T w={71} size={n}>Geral</T></NavLine>
        </NavItem>
        <NavItem $w={160} $l={160}>
          <NavLine><FaMicroscope size={29} /><T l={14} w={87} size={n}>Dados</T></NavLine>
          <NavLine><T w={145} size={n}>Científicos</T></NavLine>
        </NavItem>
        <NavItem $w={140} $l={185}>
          <NavLine><FaUserDoctor size={29} /><T l={15} w={84} size={n}>Casos</T></NavLine>
          <NavLine><T w={106} size={n}>Clínicos</T></NavLine>
        </NavItem>
        <NavItem $w={140} $l={144}>
          <NavLine $r={16}><FaBell size={29} /></NavLine>
          <NavLine><T w={96} size={n}>Alertas</T><NavBadge $w={28} $l={6} $c="#ef4444"><T w={12} size={21.6} weight={500}>3</T></NavBadge></NavLine>
        </NavItem>
        <NavItem $w={180} $l={141}>
          <NavLine><FaBrain size={29} /><T l={13} w={58.5} size={n}>Meu</T></NavLine>
          <NavLine><T w={94.5} size={n}>Estudo</T><NavBadge $w={65.5} $l={6.5} $c="#a855f7"><T w={51} size={21.6} weight={500}>NEW</T></NavBadge></NavLine>
        </NavItem>
        <NavItem $w={226} $l={104} $on>
          <NavLine $r={16}><FaComments size={33} /></NavLine>
          <NavLine><T w={85.6} size={n}>Fórum</T><NavBadge $w={41} $l={7.5} $c="#3b82f6"><T w={27} size={21.6} weight={500}>24</T></NavBadge></NavLine>
        </NavItem>
        <NavItem $w={240} $l={74}>
          <NavLine><FaShieldHalved size={29} /><T l={14} w={181} size={n}>Admin Global</T></NavLine>
          <NavLine><NavBadge $w={45} $l={4} $c="#22c55e"><EarthEmoji /></NavBadge></NavLine>
        </NavItem>
        <NavItem $w={80} $l={113}>
          <NavLine $r={14}><FaCircleUser size={31} /></NavLine>
          <NavLine><T w={71} size={n}>Perfil</T></NavLine>
        </NavItem>
      </AppHeader>
      <Main>
        <Heading>
          <div>
            <Line $h={60}>
              <Slot $l={7} $w={60}><SpeechGlow><SpeechEmoji w={60} h={54} /></SpeechGlow></Slot>
              <T l={21} w={798.5} size={54} lh={60} weight={700} glow={glow}>Fórum de Discussão Científica</T>
            </Line>
            <Line $h={40} $t={17}><T l={2} w={887} size={n} lh={40} color="#94a0b2">Espaço colaborativo para médicos discutirem cannabis medicinal</T></Line>
          </div>
          <GreenButton $w={300} $t={22} $p={28}>
            <Slot $w={24}><Plus size={35} strokeWidth={2.2} /></Slot>
            <T l={28} w={191} size={25.2}>Nova Discussão</T>
          </GreenButton>
        </Heading>
        <Chips>
          {chips.map(([t, w, c, cw, total], i) => (
            <Chip key={t} $w={total} $on={i === 0}>
              <T w={w} size={n} t={1}>{t}</T>
              <Count $w={cw}><T w={c.length * 13} size={21.6}>{c}</T></Count>
            </Chip>
          ))}
        </Chips>
        <Card $h={552} $t={57} $pt={38} $c="#1e3735">
          <Line $h={52}><T w={319.5} size={43.2} lh={52} weight={600} color="#5fe81a">Nova Discussão</T></Line>
          <Field><T w={251} size={25.2}>Título da discussão...</T></Field>
          <Area>
            <T w={550} size={25.2} lh={36}>Descreva sua questão ou experiência clínica...</T>
            <Grip width="16" height="16" viewBox="0 0 16 16" stroke="#c4c6ca" strokeWidth="1.600"><path d="M1 15L15 1M8 15l7-7" /></Grip>
          </Area>
          <Line $h={72} $t={28}>
            <GreenButton $w={285} $p={30}><T w={225} size={25.2}>Publicar Discussão</T></GreenButton>
            <GhostButton><T w={106.5} size={25.2} color="#d1d5db">Cancelar</T></GhostButton>
          </Line>
        </Card>
        <Card $h={357} $t={43} $pt={43} $c="#67500f">
          <Line $h={48}>
            <Slot $w={22} $c="#eab308"><FaThumbtack size={29} /></Slot>
            <Slot $l={21} $w={26} $c="#f97316"><FaFire size={29} /></Slot>
            <T l={22} w={968} size={32.4} weight={600}>Protocolo CBD para epilepsia refratária - Experiências clínicas</T>
            <Status><T w={71.6} size={21.6} weight={600}>Clínico</T></Status>
          </Line>
          <Line $h={43.2} $t={16}><T l={1} w={2187} size={n} lh={43} color="#d1d5db">Gostaria de discutir protocolos de CBD para epilepsia refratária em pacientes pediátricos. Tenho observado boa resposta com 20mg/kg/dia dividido em 2 doses,</T></Line>
          <Line $h={43.2}><T l={1} w={912} size={n} lh={43} color="#d1d5db">mas alguns colegas relatam melhor resposta com 3 doses diárias...</T></Line>
          <MetaLine>
            <Slot $w={22}><FaUserDoctor size={25} /></Slot><T l={8} w={512} size={25.2}>Dr. Marina Santos - Neurologista Pediátrica</T>
            <Slot $l={30} $w={32}><FaComments size={26} /></Slot><T l={6} w={150} size={25.2}>12 respostas</T>
            <Slot $l={28} $w={29}><FaEye size={26} /></Slot><T l={7} w={208} size={25.2}>156 visualizações</T>
            <Slot $l={29} $w={25}><FaClock size={25} /></Slot><T l={8} w={155} size={25.2}>2 horas atrás</T>
          </MetaLine>
          <Line $h={38} $t={20}>
            <Tag $w={98} $l={0}><T w={59} size={21.6} weight={500}>#CBD</T></Tag>
            <Tag $w={145} $l={14}><T w={107} size={21.6} weight={500}>#Epilepsia</T></Tag>
            <Tag $w={156} $l={16}><T w={119} size={21.6} weight={500}>#Pediátrico</T></Tag>
          </Line>
        </Card>
        <Card $h={200} $t={28} $pt={40} $c="#394150" />
      </Main>
    </Page>
  );
}

function PreviewPane() {
  return (
    <Pane>
      <PaneTabs>
        <PaneTab $w={186} $p={12} $on><Slot $w={27}><Monitor size={31} strokeWidth={1.5} /></Slot><T l={12} w={81.5} size={24}>Preview</T></PaneTab>
        <PaneTab $w={190} $p={15}><Slot $w={22}><PromptMark w={22} color="#5f5637" /></Slot><T l={15} w={84} size={24}>Console</T></PaneTab>
        <PaneTab $w={200} $p={12}><Slot $w={27}><MarkdownMark /></Slot><T l={12} w={94} size={24}>replit.md</T></PaneTab>
        <TabsRest>
          <Slot $l={18} $w={22}><Plus size={24} strokeWidth={1.5} /></Slot>
          <Slot $l={2463} $w={8}><Kebab h={20} r={2} color="#c5c7d0" /></Slot>
        </TabsRest>
      </PaneTabs>
      <UrlRow>
        <Slot $l={19} $w={20}><ArrowLeft size={30} strokeWidth={1.6} /></Slot>
        <Slot $l={31} $w={20} $c="#a2a5b0"><ArrowRight size={30} strokeWidth={1.6} /></Slot>
        <Slot $l={27} $w={27}><RotateCw size={31} strokeWidth={1.600} /></Slot>
        <UrlBar>
          <Slot $w={20} $c="#9fa2ad"><Link size={23} strokeWidth={1.6} /></Slot>
          <T l={5} w={104} size={22} color="#a2a5b0">.replit.dev</T>
          <T l={1} w={177} size={22}>/dashboard/forum</T>
        </UrlBar>
        <Slot $l={15} $w={27} $c="#b0b2bc"><MonitorSmartphone size={29} strokeWidth={1.500} /></Slot>
        <Slot $l={21} $w={27} $c="#b0b2bc"><Wrench size={29} strokeWidth={1.500} /></Slot>
        <Slot $l={20} $w={26} $c="#b0b2bc"><ExternalLink size={30} strokeWidth={1.500} /></Slot>
      </UrlRow>
      <Frame>
        <ForumPage />
        <ScrollTrack>
          <svg width="22" height="12" viewBox="0 0 22 12"><path d="M0 12L11 0l11 12z" fill="#8b8b8b" /></svg>
          <ScrollThumb />
          <svg width="22" height="12" viewBox="0 0 22 12"><path d="M0 0l11 12L22 0z" fill="#8b8b8b" /></svg>
        </ScrollTrack>
      </Frame>
    </Pane>
  );
}

function ReplitWorkspace() {
  return (
    <Workspace>
      <TopBar>
        <Slot $l={30} $w={27}><House size={30} strokeWidth={1.6} /></Slot>
        <AppTile><Paperclip size={24} strokeWidth={2} /></AppTile>
        <T l={11} w={109} size={26}>JobBoard</T>
        <RunPill><RunIcon><AgentMark size={29} /></RunIcon><RunLabel><T w={91} size={24.5} weight={500}>Running</T></RunLabel></RunPill>
        <Slot $l={1288} $w={25}><Search size={29} strokeWidth={1.6} /></Slot>
        <TopButton $w={140} $l={27} $p={16}><Slot $w={28}><UserPlus size={31} strokeWidth={1.500} /></Slot><T l={16} w={64.5} size={25}>Invite</T></TopButton>
        <TopButton $w={152} $l={11} $p={18}><Slot $w={23}><DeployMark size={24} /></Slot><T l={18} w={78} size={25}>Deploy</T></TopButton>
        <BellBox><Bell size={30} strokeWidth={1.600} /><RedDot /></BellBox>
        <Avatar>
          <T w={23} size={20}>PH</T>
          <CoreBadge><svg width="14" height="16" viewBox="0 0 14 16"><path d="M7 0l1.800 6.200L14 8 8.800 9.800 7 16 5.200 9.800 0 8l5.200-1.800z" fill="#ff6a00" /></svg></CoreBadge>
        </Avatar>
        <Slot $l={9} $w={12} $c="#a2a5b0"><ChevronDown size={24} strokeWidth={1.500} /></Slot>
      </TopBar>
      <Body>
        <Rail>
          <RailButton><FolderMoreMark /></RailButton>
          <RailItem t={569} on><AgentMark size={28} h={29} /></RailItem>
          <RailRule />
          <RailItem t={21} on><Monitor size={31} strokeWidth={1.500} /></RailItem>
          <RailItem t={25} on><PromptMark w={22} color="#e6cf6b" /></RailItem>
          <RailItem t={25} c="#a9cdf7"><Database size={30} strokeWidth={1.600} /></RailItem>
          <RailItem t={25} c="#6fdd8b"><DeployMark size={24} /></RailItem>
          <RailItem t={21}><LayoutGrid size={34} strokeWidth={1.400} /></RailItem>
          <RailItem t={576}><AnnounceMark /></RailItem>
          <RailItem t={22}><HelpMark /></RailItem>
        </Rail>
        <AgentPanel />
        <Splitter><SplitGrip /></Splitter>
        <PreviewPane />
      </Body>
    </Workspace>
  );
}

/* ---------- taskbar ---------- */

const Taskbar = styled.div`
  flex: none; height: 90px; display: flex; align-items: center; color: #000; font-family: ${SEGOE};
  background: linear-gradient(90deg, #ecdcdc 0, #e2d8dc 110px, #dad7d9 760px, #d8d6d9 1200px, #d9d5d8 1900px, #e0dad6 2700px, #dddbd8 3000px, #dad9dc 3840px);
`;
const SearchBox = styled.div`flex: none; width: 646px; height: 88px; margin-left: 39px; border: 2px solid #c9c9c9; background: #fff; display: flex; align-items: center;`;
const AppCell = styled.div<{ $bg?: string; $bar?: string; $wide?: boolean }>`
  position: relative; flex: none; width: 111px; height: 90px; display: flex; align-items: center; justify-content: center;
  background: linear-gradient(${(p) => p.$bar ?? "transparent"}, ${(p) => p.$bar ?? "transparent"}) center bottom / ${(p) => (p.$wide ? 109 : 91)}px 5px no-repeat,
    linear-gradient(${(p) => p.$bg ?? "transparent"}, ${(p) => p.$bg ?? "transparent"}) center / 109px 90px no-repeat;
`;
const CellBadge = styled.span`
  position: absolute; left: 64px; top: 43px; width: 40px; height: 39px; border-radius: 50%; border: 1.500px solid #3a3a3a; background: #d9bfb0e8; display: flex; align-items: center; justify-content: center;
`;
const FaceBadge = styled.span`position: absolute; left: 56px; top: 41px; width: 32px; height: 36px; border-radius: 50%; background: radial-gradient(circle at 50% 45%, #4a4440, #151311 55%);`;
const StakeTile = styled.div`width: 55px; height: 54px; background: #1a2c38; color: #fff; display: flex; align-items: center; justify-content: center; font-style: italic;`;
const Clock = styled.div`flex: none; width: 140px; height: 84px; margin: 2px 0 0 25px; display: flex; flex-direction: column; align-items: center;`;
const Notices = styled.div`position: relative; flex: none; width: 54px; height: 54px; margin-left: 43px; padding-top: 1px;`;
const NoticeCount = styled.span`
  position: absolute; left: 15px; top: 15px; width: 38px; height: 38px; border-radius: 50%; border: 1.500px solid #6d6d6d; background: #cfcfcfe6; display: flex; align-items: center; justify-content: center;
`;
const PeekLine = styled.div`width: 1.500px; height: 90px; margin-left: 29px; background: #a9a8a9;`;

const BLUE = "#0078d7";

function WindowsTaskbar() {
  return (
    <Taskbar>
      <Slot $l={38} $w={32}>
        <svg width="32" height="32" viewBox="0 0 32 32"><path d="M0 4.500l13-1.800v12.600H0zM14 2.500L32 0v15.300H14zM0 16.500h13v12.700L0 27.400zM14 16.500h18V32l-18-2.600z" /></svg>
      </Slot>
      <SearchBox>
        <Slot $l={28} $w={47}>
          <svg width="47" height="48" viewBox="0 0 47 48" fill="none" stroke="#000" strokeWidth="2.400"><circle cx="30" cy="16.500" r="15.200" /><path d="M19 27L1 47" /></svg>
        </Slot>
        <T l={32} w={138} t={4} size={32.5} lh={46} color="#2b2b2b">Pesquisar</T>
        <Slot $l={227} $w={153}>
          <svg width="153" height="80" viewBox="0 0 153 80">
            <path d="M52 27C60 8 82 0 114 1c0 20-20 32-50 27z" fill="#e03450" /><path d="M48 33C64 22 85 12 112 2" stroke="#8a3a10" strokeWidth="2.500" fill="none" />
            <path d="M0 41c6-8 24-12 44-6 18 6 24 16 36 30-6 14-30 12-44 2-10-10-26-10-36-26z" fill="#12b9d0" /><path d="M0 41c30 6 60 26 98 29" stroke="#7a4015" strokeWidth="3" fill="none" />
            <path d="M104 66c-2-30 14-46 46-62 8 26-8 56-40 60z" fill="#e87b1c" /><path d="M101 80c6-30 22-52 48-73" stroke="#8a4510" strokeWidth="3" fill="none" />
            <path d="M14 36l14 12M30 56l10-2M46 36l6 18M58 71l4-9M72 12l2 7M88 6l2 7M118 56l10-8M116 30l6 14M134 16l2 14" stroke="#fff" strokeWidth="1.800" opacity=".75" />
          </svg>
        </Slot>
      </SearchBox>
      <Slot $l={35} $w={40}>
        <svg width="40" height="38" viewBox="0 0 40 38" fill="none" stroke="#000" strokeWidth="2"><path d="M1 0v7h25V0M1 11h25v16H1zM1 38v-7h25v7M38 0v10M38 21v17" /><circle cx="38" cy="15" r="2.500" fill="#000" stroke="none" /></svg>
      </Slot>
      <Slot $l={39.5} $w={0} />
      <AppCell $bar={BLUE}>
        <svg width="54" height="50" viewBox="0 0 54 50">
          <defs>
            <linearGradient id="c1" x1="0" y1="0" x2="0" y2="1"><stop offset="0" stopColor="#1a6fe0" /><stop offset=".5" stopColor="#36b58c" /><stop offset="1" stopColor="#ffd21f" /></linearGradient>
            <linearGradient id="c2" x1="0" y1="0" x2="0" y2="1"><stop offset="0" stopColor="#a64dff" /><stop offset=".5" stopColor="#ef5f8a" /><stop offset="1" stopColor="#ff8a3c" /></linearGradient>
          </defs>
          <path d="M14 1h18q5 0 7 7l2 7H30q-5 0-7 8l-4 12q-1 3-6 3H7q-8 0-6-10L7 8q2-7 7-7z" fill="url(#c1)" />
          <path d="M40 49H22q-5 0-7-7l-1-6h9q5 0 7-8l4-11q1-3 6-3h8q8 0 6 10l-6 18q-2 7-8 7z" fill="url(#c2)" />
          <path d="M26 1h6q5 0 7 7l2 7H31z" fill="#1d3fbf" />
        </svg>
      </AppCell>
      <AppCell>
        <svg width="48" height="42" viewBox="0 0 48 42"><path d="M0 3q0-3 3-3h14l5 6H0z" fill="#dd9a00" /><path d="M0 6h45q3 0 3 3v26q0 3-3 3H3q-3 0-3-3z" fill="#ffd65c" /><path d="M8 40V26q0-5 5-5h22q5 0 5 5v14h-8V30H16v10z" fill="#3a96dd" /></svg>
      </AppCell>
      <AppCell $bg="#eaeaea" $bar={BLUE} $wide>
        <svg width="54" height="54" viewBox="0 0 54 54">
          <defs>
            <linearGradient id="e1" x1="0" y1="0" x2="1" y2=".5"><stop offset="0" stopColor="#1f9bde" /><stop offset=".55" stopColor="#35c1d6" /><stop offset="1" stopColor="#6adf4e" /></linearGradient>
            <linearGradient id="e2" x1="0" y1="0" x2="1" y2="1"><stop offset="0" stopColor="#1b8de0" /><stop offset="1" stopColor="#0c4a9c" /></linearGradient>
          </defs>
          <path d="M1 24C3 10 14 0 27 0c16 0 27 12 27 23 0 9-6 13-13 13-6 0-8-3-8-5 0-2 3-3 3-8 0-6-6-11-14-11C12 12 4 17 1 24z" fill="url(#e1)" />
          <path d="M1 24C3 17 9 13 17 13c8 0 12 4 12 4-5 1-11 7-11 16 0 10 9 17 18 16 5 0 9-2 13-4C45 51 37 54 28 54 12 54-1 41 1 24z" fill="#0f78d4" />
          <path d="M22 20c-3 3-4 8-4 13 0 10 9 16 18 16 5 0 9-2 13-4-2-3-6-2-11-2-10 0-18-10-16-23z" fill="url(#e2)" />
        </svg>
      </AppCell>
      <AppCell>
        <svg width="52" height="54" viewBox="0 0 52 54"><path d="M15 14V4q0-3 3-3h16q3 0 3 3v10" fill="none" stroke="#35b7f1" strokeWidth="4" /><path d="M0 9h52v38q0 6-6 6H6q-6 0-6-6z" fill="#0f4f94" /><path d="M16 21h10v10H16z" fill="#f25022" /><path d="M27 21h10v10H27z" fill="#7fba00" /><path d="M16 32h10v10H16z" fill="#00a4ef" /><path d="M27 32h10v10H27z" fill="#ffb900" /></svg>
      </AppCell>
      <AppCell>
        <svg width="55" height="46" viewBox="0 0 55 46"><path d="M16 14L32 1l22 12v26H16z" fill="#1e88e0" /><path d="M30 24L54 10v14L30 40z" fill="#0a4ea8" /><path d="M20 36l34-14v19q0 5-5 5H25q-5 0-5-5z" fill="#45c8f5" /><rect y="10" width="29" height="26" rx="3" fill="#0f6cbd" /><circle cx="14" cy="23" r="6.500" fill="none" stroke="#fff" strokeWidth="3.500" /></svg>
      </AppCell>
      <AppCell>
        <svg width="56" height="48" viewBox="0 0 56 48">
          <defs><linearGradient id="ark" x1="0" y1="0" x2="0" y2="1"><stop offset="0" stopColor="#8fb8bb" /><stop offset=".55" stopColor="#7f6a60" /><stop offset="1" stopColor="#b3392b" /></linearGradient></defs>
          <path d="M22 2h10l24 34-8 10L28 14 8 46 0 36z" fill="url(#ark)" /><path d="M14 34l24-10 6 8H20z" fill="#94826a" /><path d="M30 16l14 24 8-3L34 8z" fill="#58a99a" opacity=".8" />
        </svg>
      </AppCell>
      <AppCell><StakeTile><T w={47} size={24} weight={600} lh={28} font={`"Liberation Serif", serif`}>Stake</T></StakeTile></AppCell>
      <AppCell $bar={BLUE}>
        <svg width="44" height="44" viewBox="0 0 44 44"><rect width="44" height="44" rx="9" fill="#000" /><path d="M22 7l13 8v15l-13 8-13-8V15z" fill="#8d8d8d" /><path d="M9 15h26L22 38V22z" fill="#f4f4f4" /><path d="M9 15l13 7v16L9 30z" fill="#555" /></svg>
      </AppCell>
      <AppCell $bar={BLUE}>
        <svg width="54" height="54" viewBox="0 0 54 54"><path d="M10 0h26l8 5v9h-9v24h9v8l-9 5H8V38h22V12H8z" fill="#7d7f82" /><rect x="1" y="6" width="26" height="30" fill="#f0b41c" stroke="#c98a07" strokeWidth="1.500" /><path d="M1 21h26" stroke="#b87c05" strokeWidth="2" /><rect x="8" y="10" width="12" height="7" fill="#fff4cc" /><rect x="8" y="25" width="12" height="7" fill="#fff4cc" /><path d="M38 14v24" stroke="#9a9c9f" strokeWidth="6" strokeDasharray="3 2" /><path d="M26 46h26v7H26z" fill="#7d7f82" /></svg>
      </AppCell>
      <AppCell $bg="#f8ae79" $bar="#ff7b0f" $wide>
        <FaWhatsapp size={59} color="#1c8c54" />
        <CellBadge><T w={25} size={24} weight={600}>15</T></CellBadge>
      </AppCell>
      <AppCell $bg="#efeeee" $bar={BLUE} $wide>
        <svg width="54" height="54" viewBox="0 0 48 48"><circle cx="24" cy="24" r="23" fill="#fbc116" /><path d="M24 24L4.100 12.500A23 23 0 0 1 43.900 12.500H24z" fill="#e33b2e" /><path d="M24 24L4.100 12.500A23 23 0 0 0 24 47l10-17z" fill="#229342" /><path d="M4.100 12.500L14 29.800 24 12.500z" fill="#e33b2e" /><circle cx="24" cy="24" r="11.500" fill="#fff" /><circle cx="24" cy="24" r="9" fill="#1a73e8" /></svg>
        <FaceBadge />
      </AppCell>
      <Slot $l={897} $w={56}>
        <svg width="56" height="46" viewBox="0 0 56 46">
          <defs><linearGradient id="cl" x1="0" y1="0" x2="0" y2="1"><stop offset="0" stopColor="#6f98e6" /><stop offset=".6" stopColor="#a9cbf8" /><stop offset="1" stopColor="#6b8fdc" /></linearGradient></defs>
          <circle cx="39" cy="14" r="14" fill="#f28c1e" /><path d="M12 46C4 46 0 41 0 35s5-10 11-10C12 16 18 11 25 11c8 0 13 5 14 11 9-2 17 4 17 12 0 7-5 12-12 12z" fill="url(#cl)" />
        </svg>
      </Slot>
      <T l={18} w={64} t={4} size={32} lh={44}>20°C</T>
      <T l={21.6} w={194.4} t={4} size={32} lh={44}>Pred. nublado</T>
      <Slot $l={59} $w={26}><svg width="26" height="14" viewBox="0 0 26 14" fill="none" stroke="#000" strokeWidth="2.200"><path d="M1 13L13 1.500 25 13" /></svg></Slot>
      <Slot $l={23} $w={36}><svg width="36" height="30" viewBox="0 0 36 30" fill="none" stroke="#000" strokeWidth="2"><path d="M8 2h27v21H6M18 23v6M12 29h13M1 2h7v10H1zM4.500 12v17M4.500 4v5" /></svg></Slot>
      <Slot $l={18} $w={36}><svg width="36" height="34" viewBox="0 0 36 34" fill="none" stroke="#000" strokeWidth="2"><path d="M1 12h5l6-7v24l-6-7H1zM18 12q4 5 0 10M23 7q8 10 0 20M28 2q12 15 0 30" /></svg></Slot>
      <Clock><T w={63} size={26} lh={42}>17:30</T><T w={139.5} size={26} lh={42}>09/08/2025</T></Clock>
      <Notices>
        <svg width="36" height="36" viewBox="0 0 36 36"><path d="M0 0h36v31H20l-5 5v-5H0z" /><path d="M7 8h22M7 15h22M7 22h14" stroke="#dcdcdc" strokeWidth="2" /></svg>
        <NoticeCount><T w={14} size={25} weight={600}>9</T></NoticeCount>
      </Notices>
      <PeekLine />
    </Taskbar>
  );
}

export default function App() {
  return (
    <>
      <GlobalStyle />
      <Screen>
        <Chrome />
        <ReplitWorkspace />
        <WindowsTaskbar />
      </Screen>
    </>
  );
}
